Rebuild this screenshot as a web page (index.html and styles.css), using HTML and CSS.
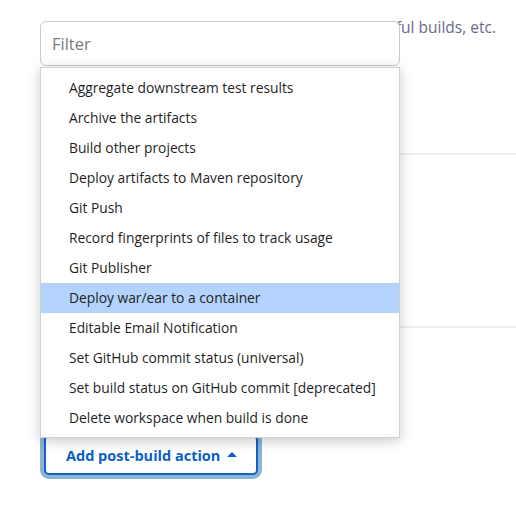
FILE: index.html
```html
<!DOCTYPE html>
<html lang="en">
<head>
<meta charset="utf-8">
<title>Post-build Actions</title>
<link rel="stylesheet" href="styles.css">
</head>
<body>
<div class="section">
  <p class="desc">Should the job notify others of successful builds, etc.</p>
  <div class="rule rule-first"></div>
  <div class="rule rule-second"></div>
  <div class="actions">
    <button class="add-btn" type="button">Add post-build action <span class="caret"></span></button>
  </div>

  <div class="dropdown">
    <input class="filter" type="text" placeholder="Filter">
    <ul class="menu">
      <li>Aggregate downstream test results</li>
      <li>Archive the artifacts</li>
      <li>Build other projects</li>
      <li>Deploy artifacts to Maven repository</li>
      <li>Git Push</li>
      <li>Record fingerprints of files to track usage</li>
      <li>Git Publisher</li>
      <li class="active">Deploy war/ear to a container</li>
      <li>Editable Email Notification</li>
      <li>Set GitHub commit status (universal)</li>
      <li>Set build status on GitHub commit [deprecated]</li>
      <li>Delete workspace when build is done</li>
    </ul>
  </div>
</div>
</body>
</html>
```

FILE: styles.css
```css
html, body {
  margin: 0;
  padding: 0;
  background: #ffffff;
}

body {
  font-family: "Open Sans", "Noto Sans", sans-serif;
  width: 516px;
  height: 515px;
  overflow: hidden;
}

.section {
  position: relative;
  padding: 15px 0 0 40px;
}

.desc {
  margin: 0;
  width: 456px;
  font-size: 15.5px;
  line-height: 24px;
  color: #6d6a86;
  white-space: nowrap;
  text-align: right;
}

.rule {
  height: 2px;
  background: #eef0f4;
}

.rule-first {
  margin-top: 114px;
}

.rule-second {
  margin-top: 171px;
}

.actions {
  padding-top: 107px;
}

.add-btn {
  display: inline-flex;
  align-items: center;
  gap: 7px;
  box-sizing: border-box;
  margin-left: 4px;
  width: 214px;
  height: 40px;
  padding: 0 0 0 20px;
  background: #ffffff;
  border: 2px solid #0f63cc;
  border-radius: 5px;
  box-shadow: 0 0 0 4px #8db4d3;
  color: #0b5fc8;
  font-family: "Open Sans", "Noto Sans", sans-serif;
  font-weight: 700;
  font-size: 14.5px;
  cursor: pointer;
}

.caret {
  width: 0;
  height: 0;
  border-left: 5px solid transparent;
  border-right: 5px solid transparent;
  border-bottom: 5px solid #0b5fc8;
  margin-bottom: 2px;
}

/* dropdown opened from the button; overlays the section */
.dropdown {
  position: absolute;
  left: 40px;
  top: 21px;
  width: 360px;
}

.filter {
  display: block;
  box-sizing: border-box;
  width: 100%;
  height: 45px;
  margin: 0;
  padding: 0 11px;
  border: 1.5px solid #c4cad2;
  border-radius: 6px;
  background: #ffffff;
  font-family: "Open Sans", "Noto Sans", sans-serif;
  font-size: 16.5px;
  color: #333;
  outline: none;
}

.filter::placeholder {
  color: #7b7b7b;
}

.menu {
  list-style: none;
  margin: 1px 0 0;
  padding: 5px 0 4px;
  background: #ffffff;
  border: 1px solid #cdd2d7;
  box-shadow: 0 3px 12px rgba(0, 0, 0, 0.22);
}

.menu li {
  height: 30px;
  line-height: 30px;
  padding-left: 28px;
  font-size: 13.8px;
  color: #1f1f1f;
  white-space: nowrap;
}

.menu li.active {
  background: #b3d3fc;
}
```
